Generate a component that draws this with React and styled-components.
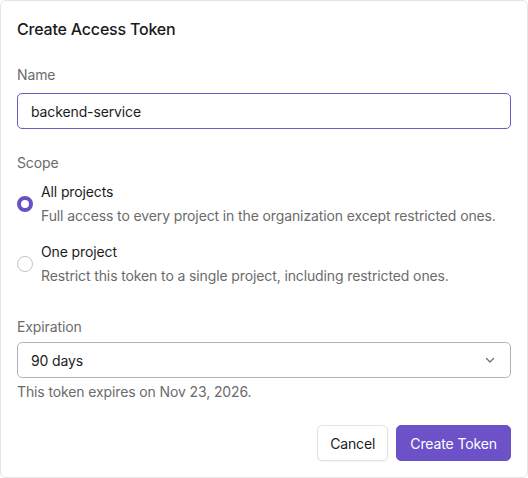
import React, { useState } from 'react';
import styled, { createGlobalStyle, css } from 'styled-components';

const GlobalStyle = createGlobalStyle`
  html, body {
    margin: 0;
    background: #ffffff;
  }
  * {
    box-sizing: border-box;
  }
`;

const Card = styled.div`
  width: 528px;
  height: 478px;
  border: 1px solid #e4e4e4;
  border-radius: 6px;
  background: #fff;
  padding: 16px 16px 16px;
  font-family: Inter, 'Liberation Sans', sans-serif;
  letter-spacing: -0.12px;
  color: #1c1c1c;
  display: flex;
  flex-direction: column;
`;

const Title = styled.h2`
  margin: 0;
  font-size: 16px;
  line-height: 24px;
  font-weight: 500;
  letter-spacing: -0.2px;
  color: #1a1a1a;
`;

const Field = styled.div`
  display: flex;
  flex-direction: column;
  margin-top: ${({ top }) => top}px;
`;

const Label = styled.label`
  font-size: 14px;
  line-height: 20px;
  color: #6b6b6b;
  margin-bottom: ${({ gap }) => gap}px;
`;

const boxBase = css`
  height: 36px;
  width: 100%;
  border-radius: 5px;
  padding: 0 13px;
  font-family: inherit;
  letter-spacing: inherit;
  font-size: 14px;
  color: #1c1c1c;
  background: #fff;
`;

const TextInput = styled.input`
  ${boxBase}
  border: 1px solid #6d5bbf;
  outline: none;
`;

const SelectBox = styled.div`
  ${boxBase}
  border: 1px solid #b3b3b3;
  display: flex;
  align-items: center;
  justify-content: space-between;
  padding-right: 14px;
`;

const Options = styled.div`
  display: flex;
  flex-direction: column;
  gap: 16px;
  margin-top: 9px;
`;

const Option = styled.label`
  display: flex;
  align-items: center;
  gap: 8px;
  cursor: pointer;
`;

const Radio = styled.span`
  flex: none;
  width: 16px;
  height: 16px;
  border-radius: 50%;
  background: #fff;
  border: ${({ checked }) => (checked ? '4.5px solid #6a4fc9' : '1.5px solid #c4c4c4')};
`;

const OptionText = styled.div`
  display: flex;
  flex-direction: column;
  gap: 4px;
`;

const OptionTitle = styled.span`
  font-size: 14px;
  line-height: 20px;
  color: #1c1c1c;
`;

const OptionHint = styled.span`
  font-size: 14px;
  line-height: 20px;
  color: #6b6b6b;
`;

const Help = styled.p`
  margin: 4px 0 0;
  font-size: 14px;
  line-height: 20px;
  color: #6b6b6b;
`;

const Actions = styled.div`
  margin-top: 23px;
  display: flex;
  justify-content: flex-end;
  gap: 8px;
`;

const Button = styled.button`
  height: 36px;
  padding: 0 ${({ primary }) => (primary ? 13 : 12)}px;
  border-radius: 5px;
  font-family: inherit;
  letter-spacing: inherit;
  font-size: 14px;
  cursor: pointer;
  ${({ primary }) =>
    primary
      ? css`
          background: #6c51c9;
          border: 1px solid #6c51c9;
          color: #fff;
        `
      : css`
          background: #fff;
          border: 1px solid #e2e2e2;
          color: #1c1c1c;
          box-shadow: 0 1px 2px rgba(0, 0, 0, 0.05);
        `}
`;

const Chevron = () => (
  <svg width="12" height="12" viewBox="0 0 12 12" fill="none">
    <path d="M2.5 4.5 6 8l3.5-3.5" stroke="#6b6b6b" strokeWidth="1.2" strokeLinecap="round" strokeLinejoin="round" />
  </svg>
);

const scopes = [
  { id: 'all', title: 'All projects', hint: 'Full access to every project in the organization except restricted ones.' },
  { id: 'one', title: 'One project', hint: 'Restrict this token to a single project, including restricted ones.' },
];

export default function App() {
  const [scope, setScope] = useState('all');
  const [name, setName] = useState('backend-service');

  return (
    <>
      <GlobalStyle />
      <Card>
        <Title>Create Access Token</Title>

        <Field top={24}>
          <Label gap={8}>Name</Label>
          <TextInput value={name} onChange={(e) => setName(e.target.value)} />
        </Field>

        <Field top={24}>
          <Label gap={0}>Scope</Label>
          <Options>
            {scopes.map((s) => (
              <Option key={s.id} onClick={() => setScope(s.id)}>
                <Radio checked={scope === s.id} />
                <OptionText>
                  <OptionTitle>{s.title}</OptionTitle>
                  <OptionHint>{s.hint}</OptionHint>
                </OptionText>
              </Option>
            ))}
          </Options>
        </Field>

        <Field top={31}>
          <Label gap={5}>Expiration</Label>
          <SelectBox>
            <span>90 days</span>
            <Chevron />
          </SelectBox>
          <Help>This token expires on Nov 23, 2026.</Help>
        </Field>

        <Actions>
          <Button>Cancel</Button>
          <Button primary>Create Token</Button>
        </Actions>
      </Card>
    </>
  );
}
